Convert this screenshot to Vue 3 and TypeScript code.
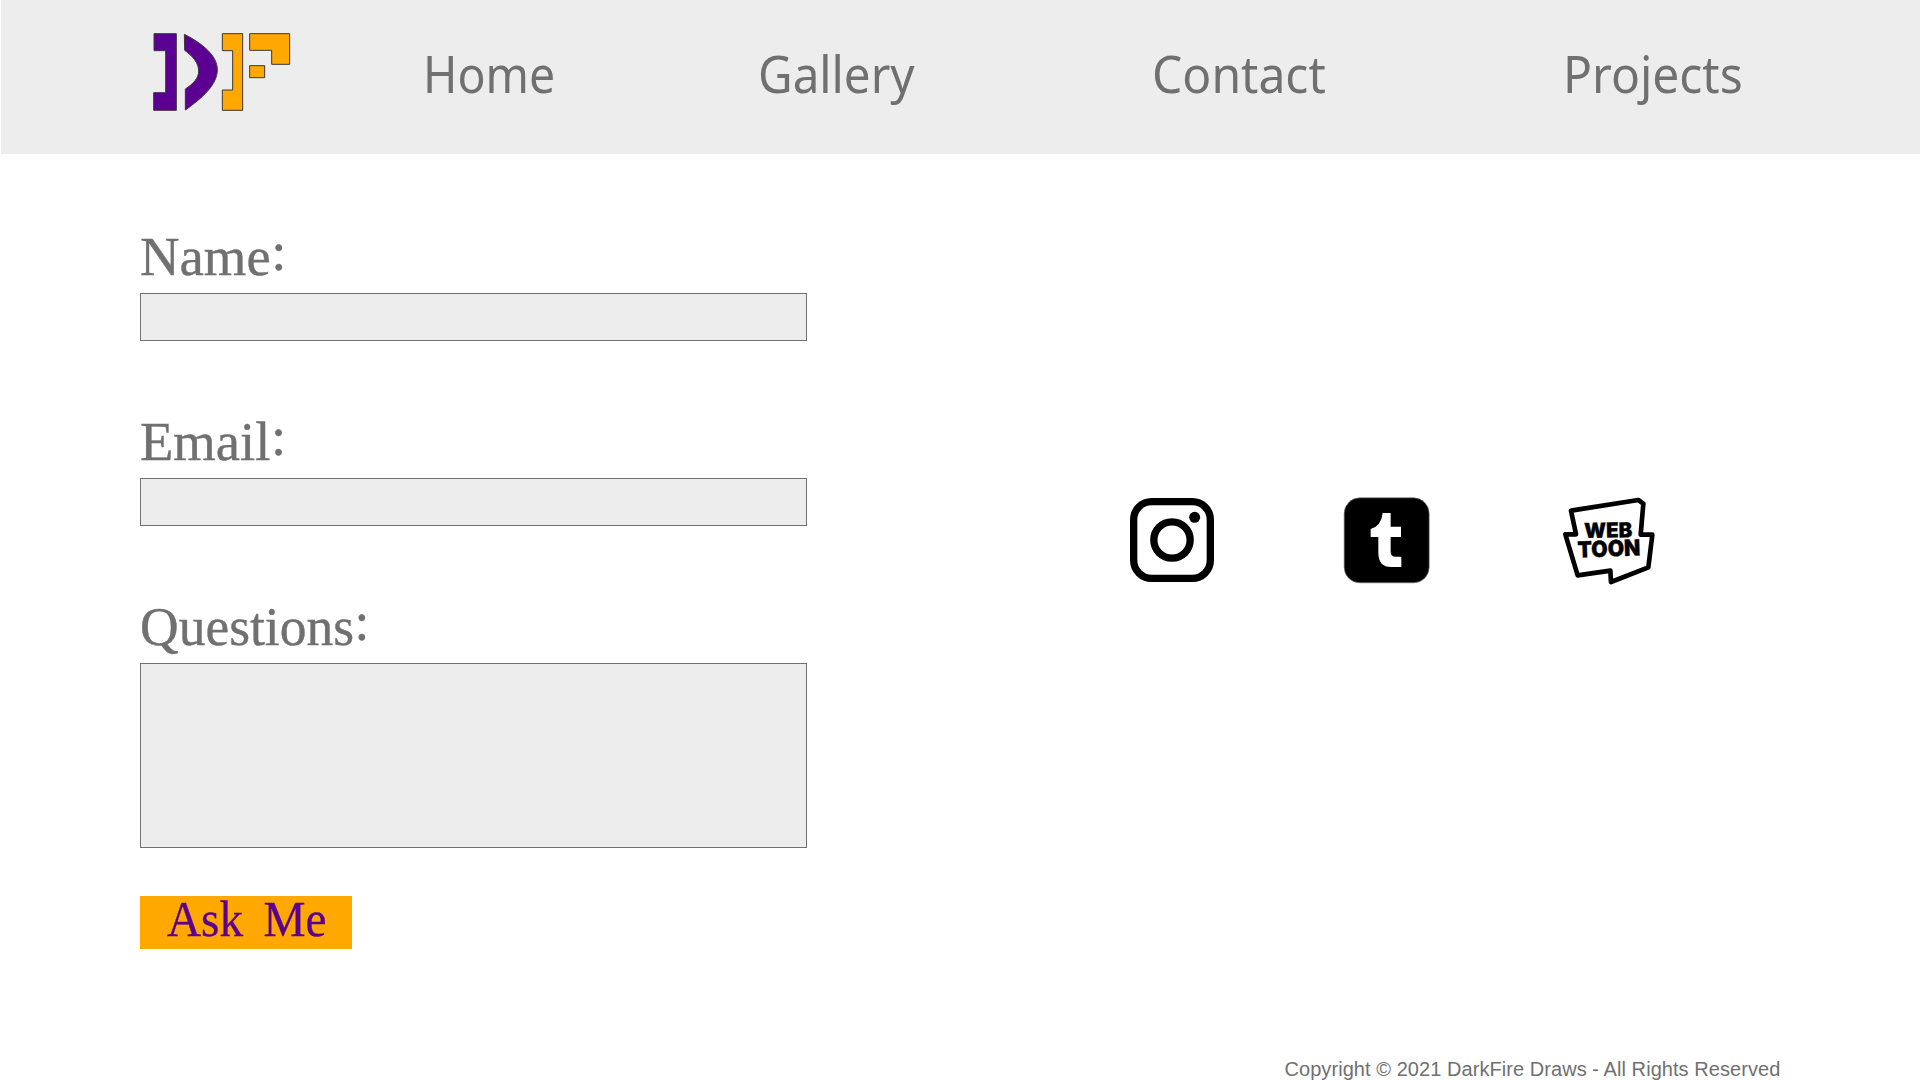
<script setup lang="ts">
interface NavItem {
  label: string
  scale: number
}

interface Field {
  id: string
  label: string
  scale: number
  multiline: boolean
}

const navItems: NavItem[] = [
  { label: 'Home', scale: 0.922 },
  { label: 'Gallery', scale: 0.944 },
  { label: 'Contact', scale: 0.953 },
  { label: 'Projects', scale: 0.952 },
]

const fields: Field[] = [
  { id: 'name', label: 'Name', scale: 1.005, multiline: false },
  { id: 'email', label: 'Email', scale: 1.002, multiline: false },
  { id: 'questions', label: 'Questions', scale: 0.982, multiline: true },
]
</script>

<template>
  <div class="page">
    <header class="bar">
      <svg class="logo" viewBox="0 0 540 360" aria-label="DF">
        <g stroke="#3d3838" stroke-width="3">
          <g fill="#5c0093">
            <path d="M72 71H139V301H71V248H107V122H72Z" />
            <path d="M163 73C218 101 262 137 262 179C262 225 215 265 166 300V237C190 221 206 205 206 183C206 159 188 138 164 121Z" />
          </g>
          <g fill="#ffa800">
            <path d="M277 71H338V301H277V240H308V122H277Z" />
            <path d="M359 71H479V163H425V121H359Z" />
            <path d="M359 167H404V203H359Z" />
          </g>
        </g>
      </svg>
      <nav class="nav">
        <a v-for="item in navItems" :key="item.label">
          <span :style="{ transform: `scaleX(${item.scale})` }">{{ item.label }}</span>
        </a>
      </nav>
    </header>

    <main class="content">
      <form class="form" @submit.prevent>
        <div v-for="f in fields" :key="f.id" class="group">
          <label :for="f.id" :style="{ transform: `scaleX(${f.scale})` }">{{ f.label }}<span class="colon">:</span></label>
          <textarea v-if="f.multiline" :id="f.id"></textarea>
          <input v-else :id="f.id" type="text" />
        </div>
        <button type="submit"><span>Ask Me</span></button>
      </form>

      <div class="social">
        <svg viewBox="0 0 360 360" aria-label="Instagram">
          <rect x="71" y="65" width="230" height="230" rx="54" fill="none" stroke="#000" stroke-width="22" />
          <circle cx="186" cy="180" r="54.500" fill="none" stroke="#000" stroke-width="22" />
          <circle cx="254" cy="112" r="16.500" />
        </svg>
        <svg viewBox="0 0 360 360" aria-label="Tumblr">
          <rect x="42.500" y="53.500" width="255" height="255" rx="47" stroke="#777" stroke-width="2" />
          <path fill="#fff" d="M158 99H182V140H213V171H182V215Q182 230 197 230H214V261H184Q145 261 145 218V171H122V147Q154 138 158 99Z" />
        </svg>
        <svg viewBox="0 0 360 360" aria-label="Webtoon">
          <path d="M63 92L265 60L280 71L272 164H307L295 262L183 306L181 272L83 286L46 163H78Z" fill="none" stroke="#000" stroke-width="14" stroke-linejoin="round" />
          <path d="M265 55L286 71L280 90L270 66Z" />
          <g class="toon">
            <text x="103" y="174" font-size="62" textLength="144" lengthAdjust="spacingAndGlyphs" transform="rotate(-1 103 174)">WEB</text>
            <text x="83" y="233" font-size="67" textLength="189" lengthAdjust="spacingAndGlyphs" transform="rotate(-2 83 233)">TOON</text>
          </g>
        </svg>
      </div>
    </main>

    <footer class="foot">Copyright © 2021 DarkFire Draws - All Rights Reserved</footer>
  </div>
</template>

<style>
body {
  margin: 0;
  background: #fff;
}
</style>

<style scoped>
.page {
  width: 1920px;
  height: 1080px;
  overflow: hidden;
  display: flex;
  flex-direction: column;
  background: #fff;
  color: #707070;
}

.bar {
  flex: none;
  height: 154px;
  margin-left: 1px;
  background: #ededed;
  display: flex;
  align-items: flex-start;
}

.logo {
  flex: none;
  width: 180px;
  height: 120px;
  margin: 10px 113.4px 0 129px;
}

.nav {
  display: grid;
  grid-template-columns: 334.9px 394.2px 410.8px 200px;
  margin-top: 39px;
  font: 50.4px/69px "Noto Sans", sans-serif;
}

.nav span {
  display: inline-block;
  transform-origin: left;
}

.content {
  flex: none;
  height: 904px;
  display: flex;
}

.form {
  width: 1110px;
  padding: 73px 0 0 140px;
  box-sizing: border-box;
}

.group {
  display: flex;
  flex-direction: column;
  align-items: flex-start;
  margin-bottom: 71px;
}

.group:nth-of-type(3) {
  margin-bottom: 48px;
}

label {
  height: 66px;
  font: 54.5px/60px "Liberation Serif", serif;
  -webkit-text-stroke: 0.4px currentColor;
  transform-origin: left;
}

.colon {
  display: inline-block;
  transform: translate(0.5px, -5px);
}

input,
textarea {
  display: block;
  box-sizing: border-box;
  width: 667px;
  height: 48px;
  margin: 0;
  padding: 0 10px;
  border: 1px solid #707070;
  border-radius: 0;
  outline: none;
  background: #ededed;
  resize: none;
}

textarea {
  height: 185px;
}

button {
  display: block;
  width: 212px;
  height: 53px;
  margin: 0;
  padding: 0 0 6px 27px;
  border: 0;
  background: #ffa800;
  color: #5c0093;
  text-align: left;
  font: 50px/45px "Liberation Serif", serif;
  -webkit-text-stroke: 0.3px currentColor;
}

button span {
  display: inline-block;
  word-spacing: 9px;
  transform: scaleX(0.945);
  transform-origin: left;
}

.social {
  display: flex;
  gap: 100px;
  padding-top: 326px;
}

.social svg {
  width: 120px;
  height: 120px;
}

.toon {
  font-family: Inter, sans-serif;
  font-weight: 900;
  stroke: #000;
  stroke-width: 1;
}

.foot {
  flex: none;
  padding-left: 1284.5px;
  font: 20px/23px "Liberation Sans", sans-serif;
  letter-spacing: 0.06px;
  white-space: nowrap;
}
</style>
